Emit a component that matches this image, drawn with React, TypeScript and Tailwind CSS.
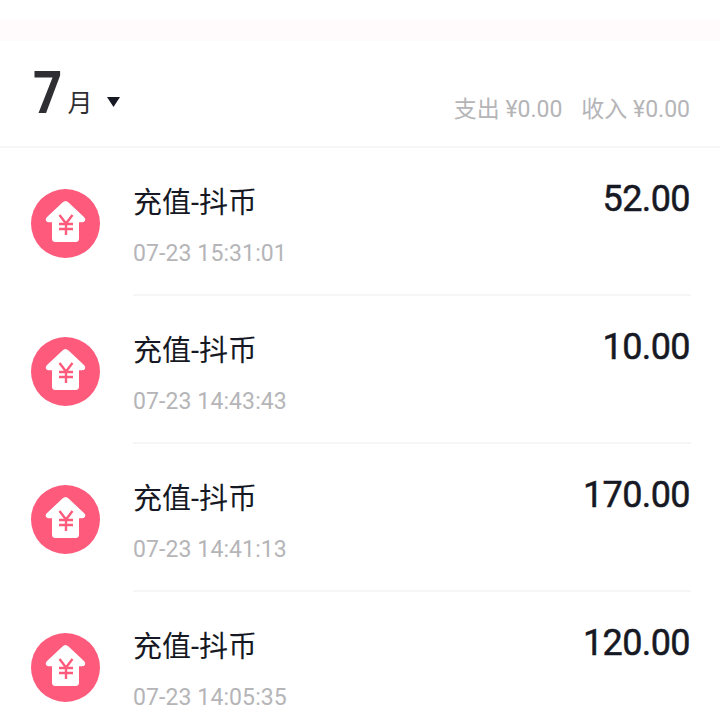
const rows = [
  { time: '07-23 15:31:01', amount: '52.00' },
  { time: '07-23 14:43:43', amount: '10.00' },
  { time: '07-23 14:41:13', amount: '170.00' },
  { time: '07-23 14:05:35', amount: '120.00' },
];

const font = { cjk: "font-['Roboto','Noto_Sans_CJK_SC',sans-serif]" };

function RechargeIcon() {
  return (
    <svg width="70" height="70" viewBox="0.5 0.5 70 70" className="shrink-0">
      <circle cx="35" cy="35" r="34.5" fill="#fd5a7c" />
      <path
        d="M35 12.5 Q36.5 12.5 38 14 L53.5 28.5 Q55.5 30.5 54.5 32.2 Q53.5 33.8 51.5 33.8 H48.5 V50 Q48.5 53.5 45 53.5 H25 Q21.5 53.5 21.5 50 V33.8 H18.5 Q16.5 33.8 15.5 32.2 Q14.5 30.5 16.5 28.5 L32 14 Q33.5 12.5 35 12.5 Z"
        fill="#fff"
      />
      <path
        d="M29 26.5 L35.5 35 L42 26.5 M35.5 35 V46.5 M28.5 35.5 H42.5 M28.5 40.5 H42.5"
        fill="none"
        stroke="#fd5a7c"
        strokeWidth="2.4"
      />
    </svg>
  );
}

function Row({ time, amount, last }: { time: string; amount: string; last: boolean }) {
  return (
    <div className="flex h-[148px] shrink-0 pl-[31px]">
      <div className="pt-[41px]">
        <RechargeIcon />
      </div>
      <div className={`ml-[32px] mr-[29px] flex-1 flex justify-between ${last ? '' : 'border-b-2 border-[#f6f6f6]'}`}>
        <div className="pt-[37px]">
          <div className={`${font.cjk} text-[29px] leading-[36px] text-[#161823]`}>充值-抖币</div>
          <div className={`${font.cjk} mt-[19px] text-[23px] leading-[28px] tracking-[0.1px] text-[#b5b5b8]`}>{time}</div>
        </div>
        <div className={`${font.cjk} pr-[1px] pt-[31px] text-[36px] leading-[40px] tracking-[-0.6px] text-[#161823] [-webkit-text-stroke:0.5px_#161823]`}>{amount}</div>
      </div>
    </div>
  );
}

export default function App() {
  return (
    <div className="h-[720px] w-[720px] overflow-hidden bg-white flex flex-col">
      <div className="h-[20px] shrink-0 bg-white" />
      <div className="h-[21px] shrink-0 bg-[#fffbfd]" />
      <div className="h-[107px] shrink-0 border-b-2 border-[#f6f6f6] flex justify-between pl-[33px] pr-[30px]">
        <div className="flex items-start">
          <span className="font-['Roboto',sans-serif] mt-[17px] text-[60px] leading-[70px] font-bold text-[#2f2f33] origin-left scale-x-[0.85]">7</span>
          <span className={`${font.cjk} mt-[45px] text-[25px] leading-[36px] text-[#2f2f33]`}>月</span>
          <svg width="13" height="10" viewBox="0 0 13 10" className="ml-[15px] mt-[56px]">
            <path d="M0 0 H13 L6.5 10 Z" fill="#161823" />
          </svg>
        </div>
        <div className={`${font.cjk} mt-[53px] flex gap-[19px] text-[23px] leading-[32px] text-[#b5b5b8]`}>
          <span>支出 ¥0.00</span>
          <span>收入 ¥0.00</span>
        </div>
      </div>
      {rows.map((r, i) => (
        <Row key={r.time} time={r.time} amount={r.amount} last={i === rows.length - 1} />
      ))}
    </div>
  );
}
